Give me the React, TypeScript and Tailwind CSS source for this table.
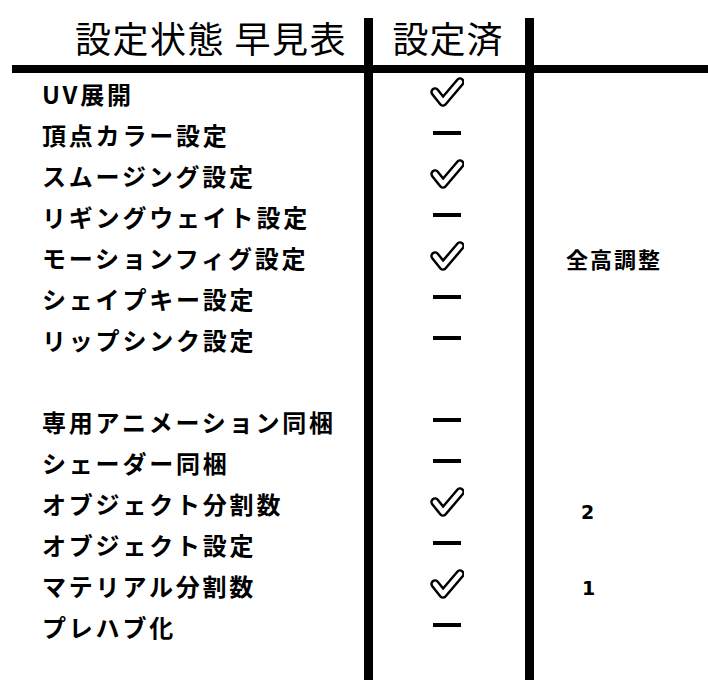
import React from "react";

type Row = { label: string; done?: boolean; note?: string; noteKind?: "text" | "num" } | null;

const rows: Row[] = [
  { label: "UV展開", done: true },
  { label: "頂点カラー設定", done: false },
  { label: "スムージング設定", done: true },
  { label: "リギングウェイト設定", done: false },
  { label: "モーションフィグ設定", done: true, note: "全高調整", noteKind: "text" },
  { label: "シェイプキー設定", done: false },
  { label: "リップシンク設定", done: false },
  null,
  { label: "専用アニメーション同梱", done: false },
  { label: "シェーダー同梱", done: false },
  { label: "オブジェクト分割数", done: true, note: "2", noteKind: "num" },
  { label: "オブジェクト設定", done: false },
  { label: "マテリアル分割数", done: true, note: "1", noteKind: "num" },
  { label: "プレハブ化", done: false },
];

const jp = { fontFamily: '"Noto Sans CJK JP", "Noto Sans", sans-serif' };

const Check = () => (
  <svg width="34" height="30" viewBox="0 0 34 30">
    <polyline points="5,15 13,25 30,5" fill="none" stroke="#000" strokeWidth="9.5" strokeLinejoin="round" strokeLinecap="round" />
    <polyline points="5,15 13,25 30,5" fill="none" stroke="#fff" strokeWidth="4.5" strokeLinejoin="round" strokeLinecap="round" />
  </svg>
);

const Dash = () => <div className="w-[28px] h-[4px] bg-black" />;

export default function App() {
  return (
    <div className="w-[708px] h-[684px] bg-white overflow-hidden pt-[18px]" style={jp}>
      <div className="flex h-[662px]">
        {/* label column */}
        <div className="w-[364px] shrink-0">
          <div className="ml-[12px] h-[55px] border-b-[8px] border-black pl-[63px] pb-[10px] flex items-center text-[36px] tracking-[1.5px] leading-none text-black">
            設定状態 早見表
          </div>
          {rows.map((r, i) => (
            <div key={i} className="h-[41px] pl-[42px] flex items-center text-[24px] font-bold tracking-[2.8px] leading-none text-black">
              {r ? r.label : ""}
            </div>
          ))}
        </div>

        {/* status column */}
        <div className="w-[170px] shrink-0 border-x-[9px] border-black">
          <div className="h-[55px] border-b-[8px] border-black pb-[10px] flex items-center justify-center text-[36px] tracking-[1px] leading-none text-black pr-[2px]">
            設定済
          </div>
          {rows.map((r, i) => (
            <div key={i} className="h-[41px] flex items-center justify-center pr-[4px] pb-[4px]">
              {r ? r.done ? <Check /> : <Dash /> : null}
            </div>
          ))}
        </div>

        {/* note column */}
        <div className="flex-1">
          <div className="h-[55px] border-b-[8px] border-black" />
          {rows.map((r, i) => (
            <div key={i} className="h-[41px] flex items-center">
              {r && r.note ? (
                r.noteKind === "num" ? (
                  <span
                    className={
                      r.note === "2"
                        ? "pl-[47px] pt-[18px] text-[19px] font-bold leading-none"
                        : "pl-[48px] pt-[6px] text-[19px] font-bold leading-none"
                    }
                    style={{ fontFamily: '"DejaVu Sans", sans-serif' }}
                  >
                    {r.note}
                  </span>
                ) : (
                  <span className="pl-[32px] text-[22px] font-bold tracking-[2px] leading-none">{r.note}</span>
                )
              ) : null}
            </div>
          ))}
        </div>
      </div>
    </div>
  );
}
